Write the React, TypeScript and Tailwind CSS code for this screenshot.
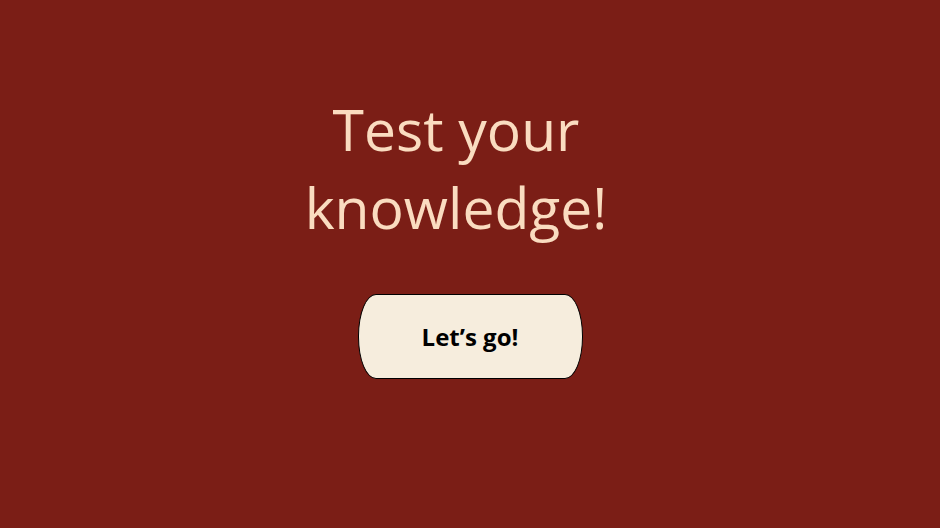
import React from "react";

export default function App() {
  return (
    <div
      className="w-[940px] h-[528px] bg-[#7b1e16] flex flex-col items-center"
      style={{ fontFamily: '"Open Sans", sans-serif' }}
    >
      <h1 className="mt-[90px] mr-[28px] w-[340px] text-center text-[57px] leading-[78px] font-normal text-[#fadcc0]">
        Test your knowledge!
      </h1>
      <button className="mt-[48px] w-[225px] h-[85px] rounded-[18px/42px] border border-black bg-[#f6eddd] text-[24px] font-bold text-black">
        Let’s go!
      </button>
    </div>
  );
}
